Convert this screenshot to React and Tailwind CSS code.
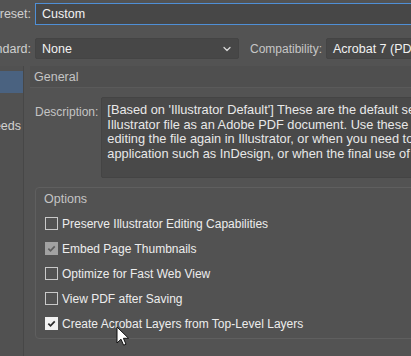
import { ChevronDown } from 'lucide-react';

const OPTIONS = [
  { label: 'Preserve Illustrator Editing Capabilities', state: 'off' },
  { label: 'Embed Page Thumbnails', state: 'disabled' },
  { label: 'Optimize for Fast Web View', state: 'off' },
  { label: 'View PDF after Saving', state: 'off' },
  { label: 'Create Acrobat Layers from Top-Level Layers', state: 'on' },
];

function Check({ state }) {
  if (state === 'off') {
    return <span className="w-[13px] h-[13px] border border-[#c9c9c9] shrink-0" />;
  }
  const disabled = state === 'disabled';
  return (
    <span
      className={[
        'w-[13px] h-[13px] shrink-0 flex items-center justify-center',
        disabled ? 'bg-[#a2a2a2]' : 'bg-[#f2f2f2]',
      ].join(' ')}
    >
      <svg width="9" height="9" viewBox="0 0 10 10">
        <path
          d="M1.5 5.2l2.4 2.4L8.6 2.6"
          fill="none"
          stroke={disabled ? '#5e5e5e' : '#2c2c2c'}
          strokeWidth="1.9"
        />
      </svg>
    </span>
  );
}

function Label({ children }) {
  // right aligned, clipped on the left like the cropped dialog
  return (
    <div className="w-[31px] shrink-0 flex justify-end overflow-hidden whitespace-nowrap text-[#cfcfcf] text-[12.5px]">
      {children}
    </div>
  );
}

export default function App() {
  return (
    <div
      className="relative w-[411px] h-[356px] overflow-hidden bg-[#535353] text-[12px] leading-[14px] select-none"
      style={{ fontFamily: '"Liberation Sans", Arial, sans-serif' }}
    >
      {/* Preset */}
      <div className="flex items-center pt-[3px]">
        <Label>Preset:</Label>
        <div className="ml-[4px] w-[420px] shrink-0 h-[22px] border border-[#4f8fd6] bg-[#474747] flex items-center pl-[6px] text-[#f2f2f2] text-[12.5px]">
          Custom
        </div>
      </div>

      {/* Standard / Compatibility */}
      <div className="flex items-center mt-[13px]">
        <Label>Standard:</Label>
        <div className="ml-[4px] w-[204px] shrink-0 h-[21px] rounded-[2px] border border-[#444] bg-[#474747] flex items-center justify-between pl-[6px] pr-[5px] text-[#f2f2f2] text-[12.5px]">
          None
          <ChevronDown size={12} strokeWidth={2.5} className="text-[#d8d8d8]" />
        </div>
        <span className="ml-[11px] text-[#c6c6c6] text-[12px] whitespace-nowrap">Compatibility:</span>
        <div className="ml-[4px] w-[120px] shrink-0 h-[21px] rounded-[2px] border border-[#444] bg-[#474747] flex items-center pl-[6px] text-[#f2f2f2] text-[12.5px] whitespace-nowrap">
          Acrobat 7 (PDF 1.6)
        </div>
      </div>

      {/* Body */}
      <div className="flex mt-[7px] h-[300px]">
        {/* Side list */}
        <div className="w-[24px] shrink-0 border-r border-[#474747] bg-[#515151] overflow-hidden pt-[5px]">
          <div className="h-[22px] bg-[#4a6280]" />
          <div className="h-[22px]" />
          <div className="h-[22px] flex items-center justify-end whitespace-nowrap text-[#d2d2d2] text-[12.5px] pr-[2px]">
            Marks and Bleeds
          </div>
        </div>

        {/* Main panel */}
        <div className="ml-[6px] w-[420px] shrink-0 flex flex-col">
          <div className="h-[22px] pt-[1px] flex items-center pl-[4px] bg-[#4f4f4f] border-b border-[#5a5a5a] text-[#c4c4c4] text-[12.5px]">
            General
          </div>

          <div className="flex mt-[9px]">
            <span className="pl-[5px] pt-[8px] text-[#c4c4c4] text-[12px]">Description:</span>
            <div className="ml-[3px] w-[340px] shrink-0 h-[81px] rounded-[2px] border border-[#444] bg-[#494949] pl-[5px] pt-[5px] text-[#e8e8e8] text-[12.8px] leading-[14.6px] whitespace-nowrap overflow-hidden">
              <div>[Based on 'Illustrator Default'] These are the default settings</div>
              <div>Illustrator file as an Adobe PDF document. Use these settings</div>
              <div>editing the file again in Illustrator, or when you need to place</div>
              <div>application such as InDesign, or when the final use of the file</div>
            </div>
          </div>

          {/* Options group */}
          <div className="ml-[5px] mt-[9px] h-[152px] rounded-[4px] border border-[#5f5f5f] bg-[#525252] pt-[4px]">
            <div className="pl-[8px] text-[#c4c4c4] text-[12.5px]">Options</div>
            <div className="mt-[11px] flex flex-col gap-[12px] pl-[9px]">
              {OPTIONS.map((o) => (
                <div key={o.label} className="flex items-center gap-[4px] h-[13px]">
                  <Check state={o.state} />
                  <span className="text-[#ededed] text-[12px] whitespace-nowrap">{o.label}</span>
                </div>
              ))}
            </div>
          </div>
        </div>
      </div>

      {/* Mouse pointer */}
      <svg className="absolute left-[116px] top-[326px]" width="13" height="21" viewBox="0 0 13 21">
        <path
          d="M1 1v16l4-3.8 2.6 6 2.4-1-2.6-5.9H12.6z"
          fill="#fff"
          stroke="#111"
          strokeWidth="1"
          strokeLinejoin="round"
        />
      </svg>
    </div>
  );
}
